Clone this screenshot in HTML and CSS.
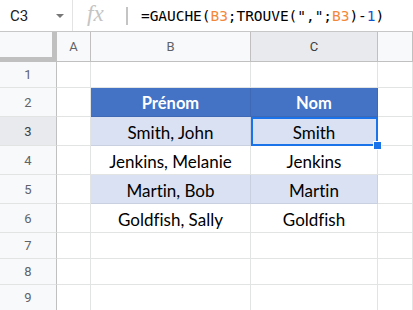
FILE: index.html
```html
<html>
    <head>
        <meta charset="utf-8">
        <title>Feuille</title>
        <link rel="stylesheet" href="styles.css">
    </head>
    <body>
        <div class="formulaBar">
            <div class="nameBox">
                <span class="cellName">C3</span>
                <span class="caret"></span>
            </div>
            <div class="fx">fx</div>
            <div class="fxSep"></div>
            <div class="formula">=GAUCHE(<span class="ref">B3</span>;TROUVE(",";<span class="ref">B3</span>)-<span class="num">1</span>)</div>
        </div>

        <div class="sheet">
            <div class="row head">
                <div class="corner"></div>
                <div class="colHead">A</div>
                <div class="colHead">B</div>
                <div class="colHead active">C</div>
                <div class="colHead"></div>
            </div>
            <div class="row short">
                <div class="rowHead">1</div>
                <div class="cell"></div>
                <div class="cell"></div>
                <div class="cell"></div>
                <div class="cell"></div>
            </div>
            <div class="row">
                <div class="rowHead">2</div>
                <div class="cell"></div>
                <div class="cell title">Prénom</div>
                <div class="cell title">Nom</div>
                <div class="cell"></div>
            </div>
            <div class="row">
                <div class="rowHead active">3</div>
                <div class="cell"></div>
                <div class="cell band">Smith, John</div>
                <div class="cell band selected">Smith<span class="selBox"></span><span class="handle"></span></div>
                <div class="cell"></div>
            </div>
            <div class="row">
                <div class="rowHead">4</div>
                <div class="cell"></div>
                <div class="cell">Jenkins, Melanie</div>
                <div class="cell">Jenkins</div>
                <div class="cell"></div>
            </div>
            <div class="row">
                <div class="rowHead">5</div>
                <div class="cell"></div>
                <div class="cell band">Martin, Bob</div>
                <div class="cell band">Martin</div>
                <div class="cell"></div>
            </div>
            <div class="row">
                <div class="rowHead">6</div>
                <div class="cell"></div>
                <div class="cell">Goldfish, Sally</div>
                <div class="cell">Goldfish</div>
                <div class="cell"></div>
            </div>
            <div class="row short">
                <div class="rowHead">7</div>
                <div class="cell"></div>
                <div class="cell"></div>
                <div class="cell"></div>
                <div class="cell"></div>
            </div>
            <div class="row short">
                <div class="rowHead">8</div>
                <div class="cell"></div>
                <div class="cell"></div>
                <div class="cell"></div>
                <div class="cell"></div>
            </div>
            <div class="row short">
                <div class="rowHead">9</div>
                <div class="cell"></div>
                <div class="cell"></div>
                <div class="cell"></div>
                <div class="cell"></div>
            </div>
        </div>
    </body>
</html>
```

FILE: styles.css
```css
body {
    margin: 0;
    background-color: #ffffff;
    font-family: Roboto, "Liberation Sans", sans-serif;
    overflow: hidden;
}
.formulaBar {
    display: flex;
    align-items: center;
    height: 31px;
    border-bottom: 1px solid #c7c7c7;
}
.nameBox {
    display: flex;
    align-items: center;
    width: 73px;
    height: 31px;
    box-sizing: border-box;
    border-right: 1px solid #e3e3e3;
    padding-left: 10px;
}
.cellName {
    font-size: 15px;
    color: #202124;
    width: 46px;
}
.caret {
    width: 0;
    height: 0;
    border-left: 4px solid transparent;
    border-right: 4px solid transparent;
    border-top: 4px solid #777777;
    margin-top: 1px;
}
.fx {
    width: 40px;
    padding-left: 14px;
    box-sizing: border-box;
    font-family: "Liberation Serif", serif;
    font-style: italic;
    font-size: 23px;
    color: #c4c4c4;
    margin-top: -3px;
}
.fxSep {
    width: 2px;
    height: 18px;
    background-color: #c4c4c4;
    margin-left: 13px;
    margin-right: 13px;
}
.formula {
    font-family: "DejaVu Sans Mono", monospace;
    font-size: 14.5px;
    color: #000000;
    white-space: nowrap;
    letter-spacing: -0.05px;
}
.ref {
    color: #f4883a;
}
.num {
    color: #1155cc;
}
.row {
    display: grid;
    grid-template-columns: 57px 34px 160px 127px 1fr;
    height: 29px;
}
.row.head {
    height: 30px;
}
.row.short {
    height: 26px;
}
.row > div {
    box-sizing: border-box;
    border-right: 1px solid #e2e3e3;
    border-bottom: 1px solid #e2e3e3;
}
.corner {
    background-color: #f8f9fa;
    border-right: 1px solid #c0c0c0 !important;
    border-bottom: 1px solid #c0c0c0 !important;
    box-shadow: inset -4px -4px 0 #c0c0c0;
}
.colHead {
    display: flex;
    align-items: center;
    justify-content: center;
    background-color: #f8f9fa;
    border-right: 1px solid #c0c0c0 !important;
    border-bottom: 1px solid #c0c0c0 !important;
    font-size: 13px;
    color: #5f6368;
}
.colHead.active {
    background-color: #e8eaed;
    color: #3c4043;
}
.rowHead {
    display: flex;
    align-items: center;
    justify-content: center;
    background-color: #f8f9fa;
    border-right: 1px solid #c0c0c0 !important;
    font-size: 13px;
    color: #5f6368;
}
.rowHead.active {
    background-color: #e8eaed;
    color: #3c4043;
}
.cell {
    display: flex;
    align-items: center;
    justify-content: center;
    font-family: Lato, "Open Sans", sans-serif;
    font-size: 17px;
    font-variant-ligatures: none;
    color: #000000;
    white-space: nowrap;
    padding-top: 2px;
}
.title {
    background-color: #4472c4;
    color: #ffffff;
    font-weight: bold;
    font-size: 16.5px;
    border-color: #3f69b4 !important;
}
.band {
    background-color: #d9e1f2;
    border-color: #c9d0df !important;
}
.selected {
    position: relative;
}
.selBox {
    position: absolute;
    left: 0;
    top: 0;
    right: -1px;
    bottom: -1px;
    border: 2px solid #1a73e8;
}
.handle {
    position: absolute;
    right: -5px;
    bottom: -5px;
    width: 7px;
    height: 7px;
    background-color: #1a73e8;
    border: 1px solid #ffffff;
}
```
